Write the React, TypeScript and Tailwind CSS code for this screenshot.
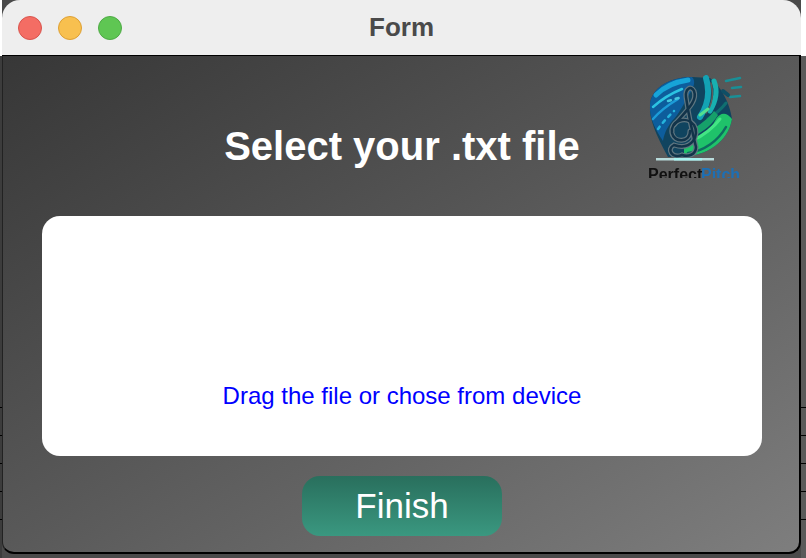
import React from 'react';

const ticks = [0, 1, 2, 3, 4];

const Logo: React.FC = () => (
  <svg width="96" height="106" viewBox="0 0 96 106" className="block blur-[0.6px]">
    <path d="M2 30 C3 14 20 2 44 2 L62 3 C72 10 82 28 84 44 C80 68 58 80 36 82 L20 82 C8 60 1 44 2 30 Z" fill="#10445f" />
    <path d="M2 30 C3 14 20 2 44 2 C48 6 46 12 42 18 C36 28 32 38 24 46 C18 54 16 60 15 66 C7 54 1 42 2 30 Z" fill="#0d5d9c" />
    <g fill="none" strokeLinecap="round">
      <path d="M8 20 C16 12 26 7 40 5" stroke="#17a4d8" strokeWidth="5" />
      <path d="M5 32 C14 24 24 18 34 14" stroke="#2bc3e2" strokeWidth="2.5" />
      <path d="M5 44 C12 36 20 30 30 24" stroke="#1c9cd8" strokeWidth="2.5" />
      <path d="M10 54 C14 48 20 42 26 36" stroke="#25b4dc" strokeWidth="2.5" strokeDasharray="3 5" />
      <path d="M20 26 L34 22" stroke="#46c6de" strokeWidth="2.5" strokeDasharray="3 5" />
    </g>
    <g fill="none" strokeLinecap="round">
      <path d="M52 42 C60 30 62 16 58 3" stroke="#13a2b4" strokeWidth="6" />
      <path d="M62 36 C68 26 70 16 66 6" stroke="#18b0b0" strokeWidth="5" />
      <path d="M58 38 C64 30 66 20 63 8" stroke="#5d5d5d" strokeWidth="1.5" />
      <path d="M60 44 C66 40 72 36 78 28" stroke="#0f6f70" strokeWidth="3" />
      <path d="M78 6 L92 3 M84 13 L93 12 M82 22 L92 21" stroke="#1a8f96" strokeWidth="2.5" />
      <path d="M75 16 L80 20" stroke="#0e4f66" strokeWidth="4" />
    </g>
    <path d="M36 82 C58 80 80 68 84 44 C78 36 72 38 68 44 C62 56 50 66 36 72 Z" fill="#1fc26a" />
    <path d="M48 52 C54 48 62 42 66 36 L70 40 C64 50 56 56 48 60 Z" fill="#16a06a" />
    <g fill="none" strokeLinecap="round">
      <path d="M40 78 C56 76 70 66 78 52" stroke="#0f6b60" strokeWidth="2.5" />
      <path d="M44 66 C56 60 66 52 72 44" stroke="#43e684" strokeWidth="3" />
      <path d="M52 40 L60 34" stroke="#52e090" strokeWidth="3" />
      <path d="M34 40 L38 36" stroke="#2ad07a" strokeWidth="3" />
    </g>
    <g fill="none" stroke="#5f7680" strokeLinecap="round" strokeWidth="5">
      <path d="M34 80 C24 84 18 74 26 70 C44 76 52 60 46 50 C38 40 22 46 24 58 C26 68 42 68 42 56" />
      <path d="M26 50 C38 36 50 26 46 16 C43 10 37 14 38 22 C40 36 44 56 48 72 C48 80 40 82 34 80" />
    </g>
    <g fill="none" stroke="#12344a" strokeLinecap="round" strokeWidth="2.5">
      <path d="M34 80 C24 84 18 74 26 70 C44 76 52 60 46 50 C38 40 22 46 24 58 C26 68 42 68 42 56" />
      <path d="M26 50 C38 36 50 26 46 16 C43 10 37 14 38 22 C40 36 44 56 48 72 C48 80 40 82 34 80" />
    </g>
    <rect x="8" y="83" width="58" height="2.5" fill="#b9dcdc" />
    <rect x="26" y="83" width="28" height="2.5" fill="#a8f2f0" />
    <text x="0" y="105" fontFamily="'Liberation Sans', sans-serif" fontWeight="700" fontSize="16" fill="#111111">Perfect</text>
    <text x="53" y="105" fontFamily="'Liberation Sans', sans-serif" fontWeight="700" fontSize="16" fill="#1d6fb4">Pitch</text>
  </svg>
);

const SideStrip: React.FC<{ className: string }> = ({ className }) => (
  <div className={`flex h-[558px] shrink-0 flex-col ${className}`}>
    <div className="h-[56px] shrink-0 bg-white"></div>
    <div className="flex flex-col gap-[27px] pt-[351px]">
      {ticks.map(i => <div key={i} className="h-px bg-black"></div>)}
    </div>
  </div>
);

const App: React.FC = () => {
  return (
    <div className="flex h-[558px] w-[806px] overflow-hidden bg-[#5d5d5d] font-['Liberation_Sans',sans-serif]">
      <SideStrip className="w-[2px] bg-[#3c3c3c]" />
      <div className="flex h-[558px] w-[799px] shrink-0 flex-col bg-[#4a4a4a]">
        <div className="relative flex h-[56px] shrink-0 items-center gap-[16px] rounded-t-[18px] border-b border-black bg-[#eeeeee] pl-[16px]">
          <span className="h-[24px] w-[24px] rounded-full border border-[#d9544d] bg-[#f46d64]"></span>
          <span className="h-[24px] w-[24px] rounded-full border border-[#dea034] bg-[#f8c04f]"></span>
          <span className="h-[24px] w-[24px] rounded-full border border-[#4eaa45] bg-[#5fc653]"></span>
          <span className="absolute inset-x-0 top-[10px] text-center text-[26px] font-bold leading-[34px] text-[#4a4a4a]">Form</span>
        </div>
        <div className="flex h-[498px] shrink-0 flex-col items-center rounded-b-[12px] border-r-2 border-b-2 border-l border-r-black border-b-black border-l-[#222222] bg-gradient-to-br from-[#373737] to-[#7e7e7e] pr-[37px] pl-[39px]">
          <div className="grid h-[160px] w-full shrink-0 grid-cols-[1fr_auto_1fr]">
            <div></div>
            <h1 className="pt-[68px] text-[40px] font-bold leading-[44px] text-white">Select your .txt file</h1>
            <div className="flex justify-end pt-[19px] pr-[18px]">
              <div className="h-[103px] overflow-hidden">
                <Logo />
              </div>
            </div>
          </div>
          <div className="flex h-[240px] w-[720px] shrink-0 items-end justify-center rounded-[18px] bg-white pb-[45px]">
            <span className="text-[24px] leading-[30px] text-[#0000ff]">Drag the file or chose from device</span>
          </div>
          <button className="mt-[20px] h-[60px] w-[200px] rounded-[18px] bg-gradient-to-b from-[#296f5d] to-[#3a9880] text-[35px] leading-[60px] text-white">Finish</button>
        </div>
      </div>
      <SideStrip className="w-[5px] bg-[#5a5a5a]" />
    </div>
  );
};

export default App;
